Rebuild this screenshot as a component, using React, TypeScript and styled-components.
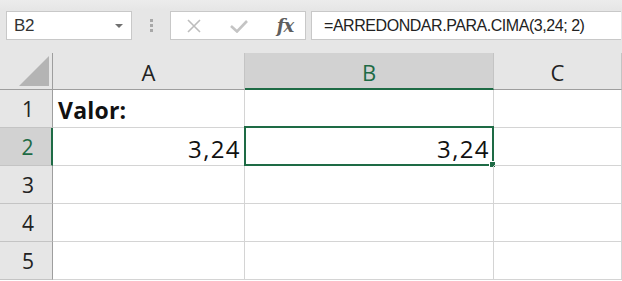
import React from "react";
import styled, { createGlobalStyle } from "styled-components";

const Global = createGlobalStyle`
  html, body { margin: 0; padding: 0; background: #ffffff; }
  body { width: 622px; height: 281px; overflow: hidden; font-family: "Open Sans", "Liberation Sans", sans-serif; }
`;

const Page = styled.div`
  width: 622px;
  height: 281px;
  display: flex;
  flex-direction: column;
  overflow: hidden;
`;

const Toolbar = styled.div`
  height: 53px;
  box-sizing: border-box;
  background: linear-gradient(#ececec 0px, #e6e6e6 10px, #e6e6e6 100%);
  display: flex;
  align-items: flex-start;
  padding: 11px 0 0 6px;
`;

const NameBox = styled.div`
  width: 126px;
  height: 29px;
  box-sizing: border-box;
  background: #fff;
  border: 1px solid #c8c8c8;
  display: flex;
  align-items: center;
  justify-content: space-between;
  padding: 0 8px 0 7px;
  font-family: "Liberation Sans", Arial, sans-serif;
  font-size: 17px;
  letter-spacing: -0.3px;
  color: #333;
`;

const Caret = styled.span`
  width: 0;
  height: 0;
  border-left: 4px solid transparent;
  border-right: 4px solid transparent;
  border-top: 4px solid #707070;
`;

const Grip = styled.div`
  width: 38px;
  height: 29px;
  display: flex;
  flex-direction: column;
  align-items: center;
  justify-content: center;
  gap: 2px;
`;

const Dot = styled.span`
  width: 3px;
  height: 3px;
  background: #a8a8a8;
`;

const FxBox = styled.div`
  width: 136px;
  height: 29px;
  box-sizing: border-box;
  background: #fff;
  border: 1px solid #c8c8c8;
  display: flex;
  align-items: center;
  padding-left: 16px;
`;

const IconSlot = styled.span<{ $w: number; $gap: number }>`
  width: ${(p) => p.$w}px;
  margin-left: ${(p) => p.$gap}px;
  display: flex;
  align-items: center;
  justify-content: center;
`;

const Fx = styled.span`
  font-family: "DejaVu Serif", "Liberation Serif", serif;
  font-style: italic;
  font-weight: bold;
  font-size: 18px;
  color: #5f5f5f;
  letter-spacing: -1px;
  line-height: 1;
`;

const FormulaBox = styled.div`
  margin-left: 5px;
  width: 310px;
  height: 29px;
  box-sizing: border-box;
  background: #fff;
  border: 1px solid #c8c8c8;
  border-right: none;
  display: flex;
  align-items: center;
  padding-left: 12px;
  font-family: "Liberation Sans", Arial, sans-serif;
  font-size: 16px;
  letter-spacing: -0.45px;
  color: #222;
`;

const Sheet = styled.div`
  display: grid;
  grid-template-columns: 53px 192px 249px 128px;
  grid-template-rows: 37px repeat(5, 38px);
  font-family: "Open Sans", "Liberation Sans", sans-serif;
`;

const Corner = styled.div`
  background: #e6e6e6;
  border-right: 1px solid #9e9e9e;
  border-bottom: 1px solid #9e9e9e;
  box-sizing: border-box;
  display: flex;
  align-items: flex-end;
  justify-content: flex-end;
  padding: 0 3px 3px 0;
`;

const ColHead = styled.div<{ $sel?: boolean }>`
  box-sizing: border-box;
  background: ${(p) => (p.$sel ? "#d2d2d2" : "#e6e6e6")};
  border-right: 1px solid #c4c4c4;
  border-bottom: ${(p) => (p.$sel ? "2px solid #1e6b45" : "1px solid #9e9e9e")};
  color: ${(p) => (p.$sel ? "#1e6b45" : "#222")};
  display: flex;
  align-items: center;
  justify-content: center;
  font-size: 22px;
  padding-top: 2px;
`;

const RowHead = styled.div<{ $sel?: boolean }>`
  box-sizing: border-box;
  background: ${(p) => (p.$sel ? "#d2d2d2" : "#e6e6e6")};
  border-right: ${(p) => (p.$sel ? "2px solid #1e6b45" : "1px solid #9e9e9e")};
  border-bottom: 1px solid #c4c4c4;
  color: ${(p) => (p.$sel ? "#1e6b45" : "#222")};
  display: flex;
  align-items: center;
  justify-content: center;
  font-size: 21px;
  padding-left: 4px;
  padding-top: 1px;
`;

const Cell = styled.div<{ $align?: "left" | "right"; $bold?: boolean }>`
  box-sizing: border-box;
  position: relative;
  border-right: 1px solid #d4d4d4;
  border-bottom: 1px solid #d4d4d4;
  display: flex;
  align-items: center;
  justify-content: ${(p) => (p.$align === "right" ? "flex-end" : "flex-start")};
  padding: ${(p) => (p.$bold ? "3px 5px 0 5px" : "4px 3px 0 5px")};
  font-size: ${(p) => (p.$bold ? "23px" : "24px")};
  letter-spacing: ${(p) => (p.$bold ? "0.2px" : "1.4px")};
  font-weight: ${(p) => (p.$bold ? 700 : 400)};
  color: #111;
`;

const Selection = styled.div`
  position: absolute;
  left: -1px;
  top: -2px;
  right: -1px;
  bottom: -1px;
  border: 2px solid #1e6b45;
  pointer-events: none;
`;

const Handle = styled.div`
  position: absolute;
  right: -4px;
  bottom: -4px;
  width: 5px;
  height: 5px;
  background: #1e6b45;
  border: 1px solid #fff;
`;

export default function App() {
  const cols = ["A", "B", "C"];
  const rows = [1, 2, 3, 4, 5];
  return (
    <Page>
      <Global />
      <Toolbar>
        <NameBox>
          <span>B2</span>
          <Caret />
        </NameBox>
        <Grip>
          <Dot />
          <Dot />
          <Dot />
        </Grip>
        <FxBox>
          <IconSlot $w={14} $gap={0}>
            <svg width="14" height="14" viewBox="0 0 14 14">
              <path d="M1 1 L13 13 M13 1 L1 13" stroke="#bdbdbd" strokeWidth="1.6" fill="none" />
            </svg>
          </IconSlot>
          <IconSlot $w={18} $gap={29}>
            <svg width="18" height="14" viewBox="0 0 18 14">
              <path d="M1 7 L7 12.5 L17 2" stroke="#c4c4c4" strokeWidth="2.6" fill="none" />
            </svg>
          </IconSlot>
          <IconSlot $w={18} $gap={28}>
            <Fx>fx</Fx>
          </IconSlot>
        </FxBox>
        <FormulaBox>=ARREDONDAR.PARA.CIMA(3,24; 2)</FormulaBox>
      </Toolbar>
      <Sheet>
        <Corner>
          <svg width="30" height="30" viewBox="0 0 30 30">
            <polygon points="0,30 30,30 30,0" fill="#b4b4b4" />
          </svg>
        </Corner>
        {cols.map((c) => (
          <ColHead key={c} $sel={c === "B"}>
            {c}
          </ColHead>
        ))}
        {rows.map((r) => (
          <React.Fragment key={r}>
            <RowHead $sel={r === 2}>{r}</RowHead>
            <Cell $bold={r === 1} $align={r === 2 ? "right" : "left"}>
              {r === 1 ? "Valor:" : r === 2 ? "3,24" : ""}
            </Cell>
            <Cell $align="right">
              {r === 2 ? (
                <>
                  3,24
                  <Selection>
                    <Handle />
                  </Selection>
                </>
              ) : (
                ""
              )}
            </Cell>
            <Cell />
          </React.Fragment>
        ))}
      </Sheet>
    </Page>
  );
}
